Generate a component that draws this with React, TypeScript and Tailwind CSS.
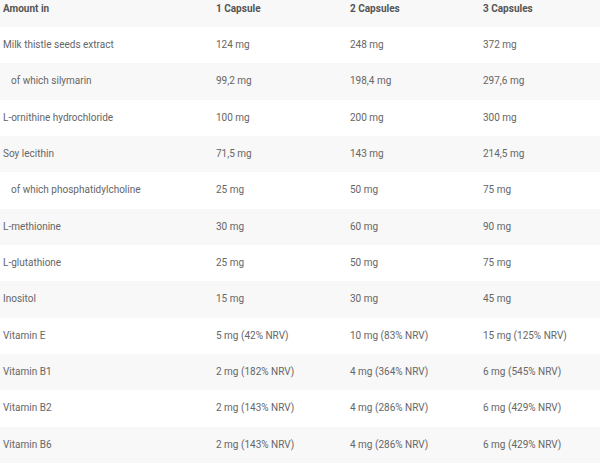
const rows: [string, string, string, string, boolean?][] = [
  ['Milk thistle seeds extract', '124 mg', '248 mg', '372 mg'],
  ['of which silymarin', '99,2 mg', '198,4 mg', '297,6 mg', true],
  ['L-ornithine hydrochloride', '100 mg', '200 mg', '300 mg'],
  ['Soy lecithin', '71,5 mg', '143 mg', '214,5 mg'],
  ['of which phosphatidylcholine', '25 mg', '50 mg', '75 mg', true],
  ['L-methionine', '30 mg', '60 mg', '90 mg'],
  ['L-glutathione', '25 mg', '50 mg', '75 mg'],
  ['Inositol', '15 mg', '30 mg', '45 mg'],
  ['Vitamin E', '5 mg (42% NRV)', '10 mg (83% NRV)', '15 mg (125% NRV)'],
  ['Vitamin B1', '2 mg (182% NRV)', '4 mg (364% NRV)', '6 mg (545% NRV)'],
  ['Vitamin B2', '2 mg (143% NRV)', '4 mg (286% NRV)', '6 mg (429% NRV)'],
  ['Vitamin B6', '2 mg (143% NRV)', '4 mg (286% NRV)', '6 mg (429% NRV)'],
]

export default function App() {
  return (
    <div className="w-[600px] h-[465px] bg-white overflow-hidden font-['Roboto',sans-serif] text-[10px] leading-[12px] text-[#666]">
      <div className="grid grid-cols-[213px_134px_133px_1fr] items-start pt-[3px] h-[27px] bg-[#f8f8f8] font-bold text-[#555]">
        <div className="pl-[3px]">Amount in</div>
        <div className="pl-[3px]">1 Capsule</div>
        <div className="pl-[3px]">2 Capsules</div>
        <div className="pl-[3px]">3 Capsules</div>
      </div>
      {rows.map(([name, a, b, c, sub], i) => (
        <div
          key={i}
          className={
            'grid grid-cols-[213px_134px_133px_1fr] items-center h-[36.33px] ' +
            (i % 2 === 1 ? 'bg-[#f8f8f8]' : 'bg-white')
          }
        >
          <div className={sub ? 'pl-[11px]' : 'pl-[3px]'}>{name}</div>
          <div className="pl-[3px]">{a}</div>
          <div className="pl-[3px]">{b}</div>
          <div className="pl-[3px]">{c}</div>
        </div>
      ))}
    </div>
  )
}
